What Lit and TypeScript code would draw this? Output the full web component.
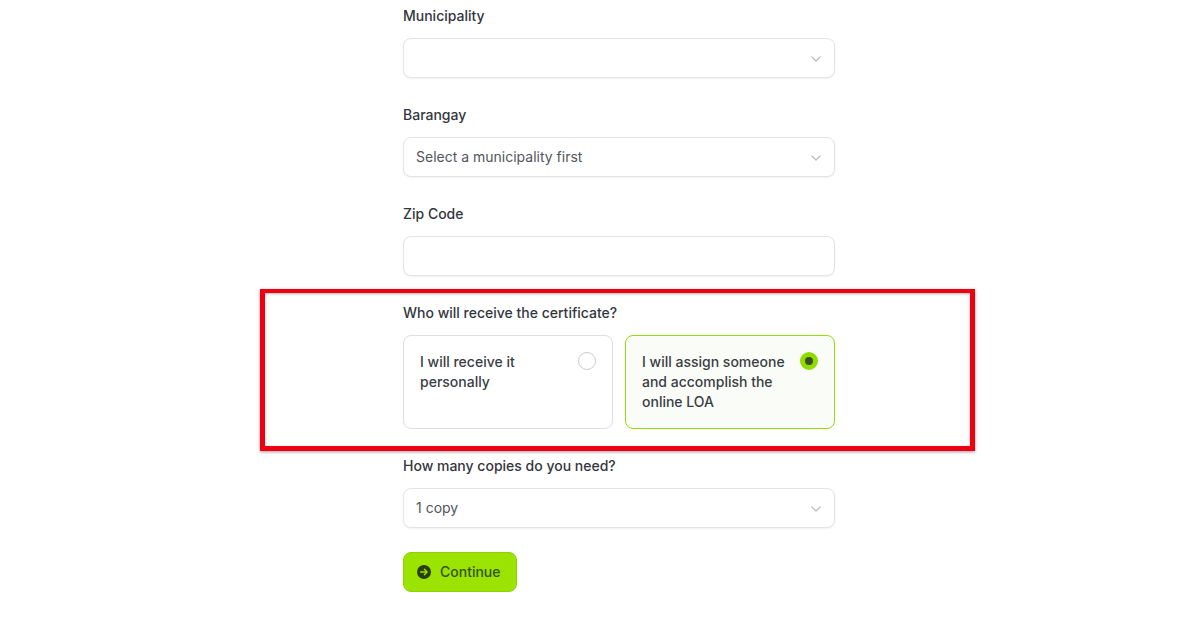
import { LitElement, html, css } from "lit";
import { customElement } from "lit/decorators.js";

const chevron = html`<svg class="chev" viewBox="0 0 10 6" width="10" height="6" fill="none" stroke="#b4b7bc" stroke-width="1.2" stroke-linecap="round" stroke-linejoin="round"><path d="M0.8 0.8 L5 5 L9.2 0.8"/></svg>`;

@customElement("app-root")
export class AppRoot extends LitElement {
  static styles = css`
    :host {
      display: block;
      position: relative;
      width: 1200px;
      height: 630px;
      overflow: hidden;
      background: #fff;
      font-family: Inter, "Liberation Sans", sans-serif;
      color: #33373d;
    }
    .form {
      width: 432px;
      margin-left: 403px;
      padding-top: 6px;
      display: flex;
      flex-direction: column;
      gap: 27px;
    }
    .field {
      display: flex;
      flex-direction: column;
      gap: 12px;
    }
    .label {
      font-size: 14px;
      line-height: 20px;
      font-weight: 500;
      color: #33373d;
    }
    .box {
      box-sizing: border-box;
      height: 40px;
      border: 1px solid #e2e4e8;
      border-radius: 8px;
      background: #fff;
      box-shadow: 0 1px 2px rgba(16, 24, 40, 0.06);
      padding: 0 13px 0 12px;
      display: flex;
      align-items: center;
      justify-content: space-between;
      font-size: 14px;
      color: #52565d;
    }
    .box span {
      position: relative;
      top: -0.5px;
    }
    .chev {
      margin-left: auto;
      position: relative;
      top: 1px;
    }
    .cards {
      display: grid;
      grid-template-columns: 1fr 1fr;
      gap: 12px;
    }
    .card {
      box-sizing: border-box;
      height: 94px;
      border: 1px solid #dcdee2;
      border-radius: 8px;
      padding: 16px;
      display: flex;
      justify-content: space-between;
      align-items: flex-start;
      gap: 12px;
      font-size: 14px;
      line-height: 20px;
      font-weight: 500;
      color: #3a3e45;
    }
    .card.on {
      border-color: #93dd0a;
      background: #fafcf7;
    }
    .radio {
      box-sizing: border-box;
      flex: none;
      width: 18px;
      height: 18px;
      border-radius: 50%;
      border: 1px solid #c9ccd1;
      background: #fff;
    }
    .radio.on {
      border: 5px solid #8fdc00;
      background: #3c4d24;
    }
    .btn {
      box-sizing: border-box;
      align-self: flex-start;
      height: 40px;
      width: 114px;
      margin-top: -3px;
      padding: 0 13px;
      display: flex;
      align-items: center;
      gap: 9px;
      border: 1px solid #8fd400;
      border-radius: 8px;
      background: #9be300;
      color: #355205;
      font: 500 14px/20px Inter, "Liberation Sans", sans-serif;
    }
    .highlight {
      position: absolute;
      left: 260px;
      top: 289px;
      width: 715px;
      height: 162px;
      box-sizing: border-box;
      border-style: solid;
      border-color: #ec0012;
      border-width: 4px 5px 5px 5px;
      box-shadow: 0 1px 3px rgba(0, 0, 0, 0.4), inset 0 1px 3px rgba(0, 0, 0, 0.3);
      pointer-events: none;
    }
  `;

  render() {
    return html`
      <div class="form">
        <div class="field">
          <div class="label">Municipality</div>
          <div class="box">${chevron}</div>
        </div>
        <div class="field">
          <div class="label">Barangay</div>
          <div class="box"><span>Select a municipality first</span>${chevron}</div>
        </div>
        <div class="field">
          <div class="label">Zip Code</div>
          <div class="box"></div>
        </div>
        <div class="field">
          <div class="label">Who will receive the certificate?</div>
          <div class="cards">
            <div class="card"><span>I will receive it personally</span><span class="radio"></span></div>
            <div class="card on"><span>I will assign someone and accomplish the online LOA</span><span class="radio on"></span></div>
          </div>
        </div>
        <div class="field">
          <div class="label">How many copies do you need?</div>
          <div class="box"><span>1 copy</span>${chevron}</div>
        </div>
        <button class="btn">
          <svg viewBox="0 0 14 14" width="14" height="14">
            <circle cx="7" cy="7" r="7" fill="#2a3d0c"/>
            <path d="M3.6 7 H10 M7.4 4.3 L10.1 7 L7.4 9.7" fill="none" stroke="#9be300" stroke-width="1.4" stroke-linecap="round" stroke-linejoin="round"/>
          </svg>
          <span>Continue</span>
        </button>
      </div>
      <div class="highlight"></div>
    `;
  }
}
